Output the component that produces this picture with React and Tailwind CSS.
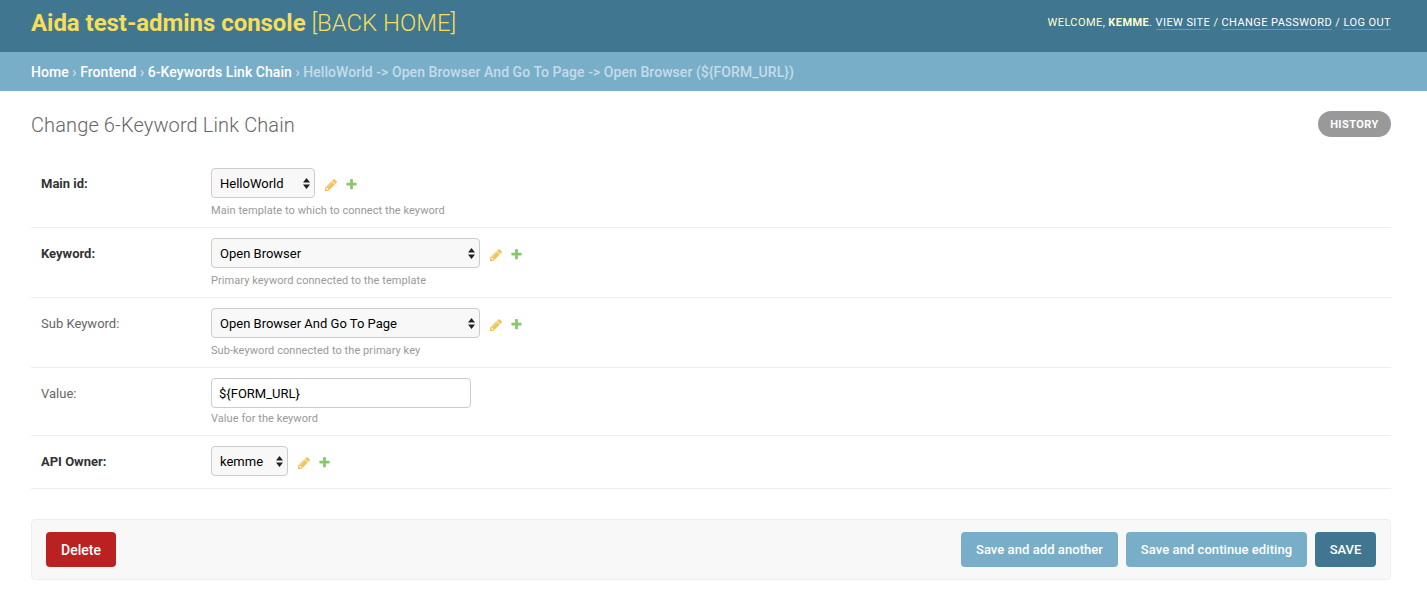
import React from "react";

const Pencil = () => (
  <svg width="14" height="14" viewBox="0 0 1792 1792" className="shrink-0">
    <path fill="#eeab12" opacity="0.72" d="M491 1536l91-91-235-235-91 91v107h128v128h107zm523-928q0-22-22-22-10 0-17 7l-542 542q-7 7-7 17 0 22 22 22 10 0 17-7l542-542q7-7 7-17zm-54-192l416 416-832 832h-416v-416zm683 96q0 53-37 90l-166 166-416-416 166-165q36-38 90-38 53 0 91 38l235 234q37 39 37 91z" />
  </svg>
);

const Plus = () => (
  <svg width="13" height="13" viewBox="0 0 1792 1792" className="shrink-0">
    <path fill="#5fb53a" opacity="0.75" d="M1600 736v192q0 40-28 68t-68 28h-416v416q0 40-28 68t-68 28h-192q-40 0-68-28t-28-68v-416h-416q-40 0-68-28t-28-68v-192q0-40 28-68t68-28h416v-416q0-40 28-68t68-28h192q40 0 68 28t28 68v416h416q40 0 68 28t28 68z" />
  </svg>
);

const Select = ({ value, w }) => (
  <div className={`relative h-[30px] ${w}`}>
    <select
      defaultValue={value}
      className="h-full w-full appearance-none rounded-[4px] border border-[#cccccc] bg-[#f8f8f8] pl-2 pr-5 pt-[2px] text-[13px] text-black outline-none"
    >
      <option>{value}</option>
    </select>
    <svg width="7" height="11" viewBox="0 0 7 11" className="pointer-events-none absolute right-[5px] top-[10px]">
      <path d="M3.5 0L7 4.4H0Z M3.5 11L0 6.6H7Z" fill="#222222" />
    </svg>
  </div>
);

const Row = ({ label, required, help, helpGap, className, children }) => (
  <div className={`flex border-b border-[#eeeeee] pl-[10px] pt-[10px] ${className}`}>
    <label className={`w-[170px] shrink-0 pt-[8px] text-[13px] leading-[16px] ${required ? "font-bold text-[#333333]" : "text-[#666666]"}`}>
      {label}
    </label>
    <div>
      {children}
      {help && <p className={`${helpGap} text-[11px] leading-[16px] tracking-[0.006em] text-[#999999]`}>{help}</p>}
    </div>
  </div>
);

const Widget = ({ value, w }) => (
  <div className="flex items-center">
    <Select value={value} w={w} />
    <div className="ml-[9px] mt-[3px] flex items-center gap-[7px]">
      <Pencil />
      <Plus />
    </div>
  </div>
);

const Sep = () => <span className="text-[#ffffff]/70"> › </span>;

export default function App() {
  return (
    <div className="min-h-[603px] bg-white font-['Roboto',sans-serif] text-[#333333]">
      <header className="flex h-[52px] items-center justify-between bg-[#417690] pb-[6px] pl-[31px] pr-[36px]">
        <h1 className="text-[24px] font-light leading-[24px] tracking-[-0.002em] text-[#f5dd5d]">
          <span className="font-bold">Aida test-admins console</span> [BACK HOME]
        </h1>
        <div className="text-[11px] uppercase tracking-[0.038em] text-[#ffffcc]">
          Welcome, <strong className="font-bold">kemme</strong>.{" "}
          <a className="border-b border-[#ffffff]/25 text-[#ffffff]">View site</a> /{" "}
          <a className="border-b border-[#ffffff]/25 text-[#ffffff]">Change password</a> /{" "}
          <a className="border-b border-[#ffffff]/25 text-[#ffffff]">Log out</a>
        </div>
      </header>

      <nav className="flex h-[39px] items-center whitespace-pre bg-[#79aec8] pl-[31px] pt-[2px] text-[14px] tracking-[0.004em] text-[#c4dce8]">
        <a className="font-medium text-white">Home</a>
        <Sep />
        <a className="font-medium text-white">Frontend</a>
        <Sep />
        <a className="font-medium text-white">6-Keywords Link Chain</a>
        <Sep />
        <span className="font-medium">{"HelloWorld -> Open Browser And Go To Page -> Open Browser (${FORM_URL})"}</span>
      </nav>

      <main className="pl-[31px] pr-[36px]">
        <div className="flex items-start justify-between pt-[20px]">
          <h2 className="pt-[1px] text-[20px] font-light leading-[26px] tracking-[0.006em] text-[#666666]">Change 6-Keyword Link Chain</h2>
          <a className="flex h-[26px] w-[73px] items-center justify-center rounded-[15px] bg-[#999999] pt-[2px] text-[11px] font-bold tracking-[0.04em] text-white">
            HISTORY
          </a>
        </div>

        <div className="mt-[20px]">
          <Row label="Main id:" required help="Main template to which to connect the keyword" helpGap="mt-[5px]" className="h-[70px]">
            <Widget value="HelloWorld" w="w-[104px]" />
          </Row>
          <Row label="Keyword:" required help="Primary keyword connected to the template" helpGap="mt-[5px]" className="h-[70px]">
            <Widget value="Open Browser" w="w-[269px]" />
          </Row>
          <Row label="Sub Keyword:" help="Sub-keyword connected to the primary key" helpGap="mt-[5px]" className="h-[70px]">
            <Widget value="Open Browser And Go To Page" w="w-[269px]" />
          </Row>
          <Row label="Value:" help="Value for the keyword" helpGap="mt-[3px]" className="h-[68px]">
            <input
              readOnly
              value="${FORM_URL}"
              className="block h-[30px] w-[260px] rounded-[4px] border border-[#cccccc] bg-white px-[7px] text-[13px] text-black outline-none"
            />
          </Row>
          <Row label="API Owner:" required className="h-[53px]">
            <Widget value="kemme" w="w-[77px]" />
          </Row>
        </div>

        <div className="mt-[30px] flex h-[61px] items-center justify-between rounded-[4px] border border-[#eeeeee] bg-[#f8f8f8] px-[14px]">
          <a className="flex h-[35px] w-[70px] items-center justify-center rounded-[4px] bg-[#ba2121] pt-[2px] text-[14px] font-medium text-white">
            Delete
          </a>
          <div className="flex gap-[8px]">
            <button className="h-[35px] w-[157px] rounded-[4px] bg-[#79aec8] text-[13px] font-medium tracking-[0.005em] text-white">Save and add another</button>
            <button className="h-[35px] w-[181px] rounded-[4px] bg-[#79aec8] text-[13px] font-medium tracking-[0.005em] text-white">Save and continue editing</button>
            <button className="h-[35px] w-[61px] rounded-[4px] bg-[#417690] text-[13px] font-medium text-white">SAVE</button>
          </div>
        </div>
      </main>
    </div>
  );
}
